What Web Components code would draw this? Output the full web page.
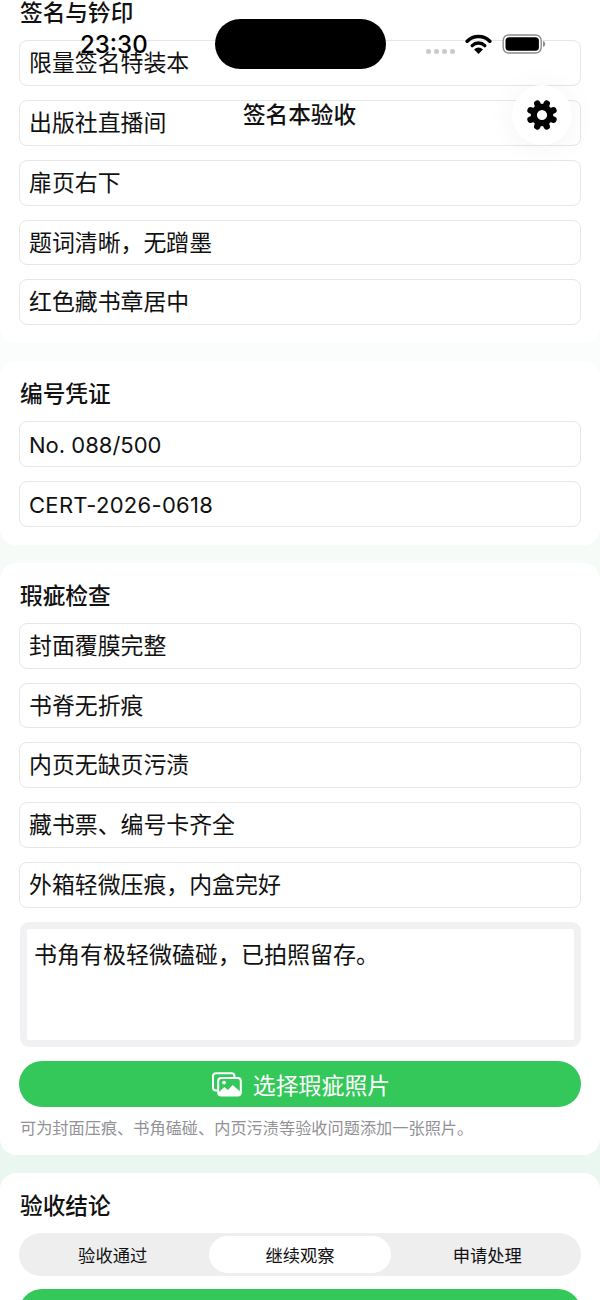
<!DOCTYPE html>
<html lang="zh-CN">
<head>
<meta charset="utf-8">
<title>签名本验收</title>
<style>
    html, body {
        margin: 0;
        padding: 0;
    }
    body {
        font-family: "Inter", "Noto Sans CJK SC", sans-serif;
        color: #111;
    }
</style>
</head>
<body>
<check-screen>
    <status-bar slot="overlay" time="23:30"></status-bar>
    <nav-header slot="overlay">签名本验收</nav-header>

    <form-card heading="签名与钤印">
        <text-field>限量签名特装本</text-field>
        <text-field>出版社直播间</text-field>
        <text-field>扉页右下</text-field>
        <text-field>题词清晰，无蹭墨</text-field>
        <text-field>红色藏书章居中</text-field>
    </form-card>

    <form-card heading="编号凭证">
        <text-field style="font-size: 22px; line-height: 46.6px">No. 088/500</text-field>
        <text-field style="font-size: 22px; line-height: 46.6px; letter-spacing: 0.3px">CERT-2026-0618</text-field>
    </form-card>

    <form-card heading="瑕疵检查">
        <text-field>封面覆膜完整</text-field>
        <text-field>书脊无折痕</text-field>
        <text-field>内页无缺页污渍</text-field>
        <text-field>藏书票、编号卡齐全</text-field>
        <text-field>外箱轻微压痕，内盒完好</text-field>
        <note-box>书角有极轻微磕碰，已拍照留存。</note-box>
        <green-button icon>选择瑕疵照片</green-button>
        <hint-text>可为封面压痕、书角磕碰、内页污渍等验收问题添加一张照片。</hint-text>
    </form-card>

    <form-card heading="验收结论">
        <segment-switch options="验收通过,继续观察,申请处理" selected="1"></segment-switch>
        <green-button></green-button>
    </form-card>
</check-screen>

<script>
    class CheckScreen extends HTMLElement {
        constructor() {
            super();
            this.attachShadow({mode: 'open'});
            this.shadowRoot.innerHTML = `
                <style>
                    :host {
                        display: block;
                        position: relative;
                        width: 600px;
                        height: 1300px;
                        overflow: hidden;
                        background: linear-gradient(#fcfefd 0%, #fafdfb 27%, #f6fbf8 42.5%, #e9f7f0 90%, #e6f6ee 100%);
                    }
                    .list {
                        display: flex;
                        flex-direction: column;
                        gap: 18px;
                        margin-top: -19.8px;
                    }
                </style>
                <div class="list"><slot></slot></div>
                <slot name="overlay"></slot>
            `;
        }
    }

    class StatusBar extends HTMLElement {
        constructor() {
            super();
            this.attachShadow({mode: 'open'});
            this.shadowRoot.innerHTML = `
                <style>
                    :host {
                        display: block;
                        position: absolute;
                        top: 0;
                        left: 0;
                        width: 600px;
                        height: 88px;
                        pointer-events: none;
                    }
                    .time {
                        position: absolute;
                        left: 80px;
                        top: 30px;
                        font: 500 24px/30px "Inter", sans-serif;
                        color: #000;
                    }
                    .island {
                        position: absolute;
                        left: 215px;
                        top: 19px;
                        width: 171px;
                        height: 50px;
                        border-radius: 25px;
                        background: #000;
                    }
                    .dots {
                        position: absolute;
                        left: 426px;
                        top: 49px;
                        display: flex;
                        gap: 3px;
                    }
                    .dots i {
                        width: 5px;
                        height: 5px;
                        border-radius: 50%;
                        background: #c9c9c9;
                    }
                    svg {
                        position: absolute;
                    }
                </style>
                <div class="time"></div>
                <div class="island"></div>
                <div class="dots"><i></i><i></i><i></i><i></i></div>
                <svg style="left:465px;top:33px" width="27" height="21" viewBox="0 0 27 21">
                    <path d="M2.2 8.2a16 16 0 0 1 22.6 0" fill="none" stroke="#000" stroke-width="3.6" stroke-linecap="round"/>
                    <path d="M7.2 12.6a9 9 0 0 1 12.6 0" fill="none" stroke="#000" stroke-width="3.4" stroke-linecap="round"/>
                    <path d="M13.5 21l-4.4-4.6a6.2 6.2 0 0 1 8.8 0z" fill="#000"/>
                </svg>
                <svg style="left:502px;top:34px" width="44" height="20" viewBox="0 0 44 20">
                    <rect x="1.2" y="1" width="38" height="18" rx="5.5" fill="#fff" stroke="#8c8c8c" stroke-width="1.4"/>
                    <rect x="3.5" y="3.2" width="33.4" height="13.6" rx="3.6" fill="#000"/>
                    <path d="M41 7v6c1.4-.4 2.2-1.6 2.2-3s-.8-2.6-2.2-3z" fill="#8c8c8c"/>
                </svg>
            `;
            this.shadowRoot.querySelector('.time').textContent = this.getAttribute('time');
        }
    }

    class NavHeader extends HTMLElement {
        constructor() {
            super();
            this.attachShadow({mode: 'open'});
            // gear teeth are rotated copies of one rounded bar
            const teeth = [22.5, 67.5, 112.5, 157.5].map(a =>
                `<rect x="12" y="0.4" width="6" height="29.2" rx="2.9" transform="rotate(${a} 15 15)"/>`).join('');
            this.shadowRoot.innerHTML = `
                <style>
                    :host {
                        display: block;
                        position: absolute;
                        top: 85px;
                        left: 0;
                        width: 600px;
                        height: 60px;
                    }
                    .title {
                        margin: -1px 1px 0 0;
                        text-align: center;
                        font: 500 22.6px/60px "Noto Sans CJK SC", sans-serif;
                        color: #111;
                    }
                    .gear {
                        position: absolute;
                        right: 28px;
                        top: 0;
                        width: 60px;
                        height: 60px;
                        display: flex;
                        align-items: center;
                        justify-content: center;
                        border-radius: 50%;
                        background: #fff;
                        box-shadow: 0 2px 30px rgba(0, 0, 0, 0.05);
                    }
                </style>
                <div class="title"><slot></slot></div>
                <div class="gear">
                    <svg width="32" height="32" viewBox="0 0 30 30" fill="#000">
                        ${teeth}
                        <circle cx="15" cy="15" r="10.5"/>
                        <circle cx="15" cy="15" r="4.8" fill="#fff"/>
                    </svg>
                </div>
            `;
        }
    }

    class FormCard extends HTMLElement {
        constructor() {
            super();
            this.attachShadow({mode: 'open'});
            this.shadowRoot.innerHTML = `
                <style>
                    :host {
                        display: block;
                        background: #fff;
                        border-radius: 16px;
                        padding: 17px 19px 18px;
                    }
                    h2 {
                        margin: 0 0 13px 1px;
                        font: 500 22.7px/30px "Noto Sans CJK SC", sans-serif;
                        color: #111;
                    }
                    .body {
                        display: flex;
                        flex-direction: column;
                        gap: 14px;
                    }
                </style>
                <h2></h2>
                <div class="body"><slot></slot></div>
            `;
            this.shadowRoot.querySelector('h2').textContent = this.getAttribute('heading');
        }
    }

    class TextField extends HTMLElement {
        constructor() {
            super();
            this.attachShadow({mode: 'open'});
            this.shadowRoot.innerHTML = `
                <style>
                    :host {
                        display: block;
                        box-sizing: border-box;
                        height: 45.8px;
                        padding: 0 9px;
                        border: 1px solid #e6e6e8;
                        border-radius: 8px;
                        background: #fff;
                        font: 400 22.9px/45.4px "Inter", "Noto Sans CJK SC", sans-serif;
                        color: #111;
                        white-space: nowrap;
                    }
                </style>
                <slot></slot>
            `;
        }
    }

    class NoteBox extends HTMLElement {
        constructor() {
            super();
            this.attachShadow({mode: 'open'});
            this.shadowRoot.innerHTML = `
                <style>
                    :host {
                        display: block;
                        box-sizing: border-box;
                        height: 125.5px;
                        margin-left: 1px;
                        padding: 7px 7px;
                        border: 7px solid #f1f1f4;
                        border-radius: 9px;
                        background: #fff;
                        font: 400 23px/34px "Noto Sans CJK SC", sans-serif;
                        color: #111;
                    }
                </style>
                <slot></slot>
            `;
        }
    }

    class GreenButton extends HTMLElement {
        constructor() {
            super();
            this.attachShadow({mode: 'open'});
            const icon = this.hasAttribute('icon') ? `
                <svg width="30" height="25" viewBox="0 0 30 25">
                    <path d="M5.5 18.5H4a3 3 0 0 1-3-3V4.2a3 3 0 0 1 3-3h15.5a3 3 0 0 1 3 3V5" fill="none" stroke="#fff" stroke-width="2"/>
                    <rect x="6.2" y="6" width="22.6" height="17.6" rx="3" fill="none" stroke="#fff" stroke-width="2"/>
                    <path d="M6.5 20.5l5.8-5.4 3.6 3 4.8-5.2 8 7.2v1.2a2.4 2.4 0 0 1-2.4 2.4H8.8a2.4 2.4 0 0 1-2.4-2.4z" fill="#fff"/>
                    <circle cx="12" cy="10.6" r="1.9" fill="#fff"/>
                </svg>` : '';
            this.shadowRoot.innerHTML = `
                <style>
                    :host {
                        display: flex;
                        align-items: center;
                        justify-content: center;
                        gap: 11px;
                        height: 46px;
                        padding-left: 2px;
                        border-radius: 23px;
                        background: #34c759;
                        color: #fff;
                        font: 400 22.9px/45px "Noto Sans CJK SC", sans-serif;
                    }
                </style>
                ${icon}<slot></slot>
            `;
        }
    }

    class HintText extends HTMLElement {
        constructor() {
            super();
            this.attachShadow({mode: 'open'});
            this.shadowRoot.innerHTML = `
                <style>
                    :host {
                        display: block;
                        margin: -3.2px 0 0 1px;
                        font: 400 16.2px/19px "Noto Sans CJK SC", sans-serif;
                        color: #919196;
                        white-space: nowrap;
                    }
                </style>
                <slot></slot>
            `;
        }
    }

    class SegmentSwitch extends HTMLElement {
        constructor() {
            super();
            this.attachShadow({mode: 'open'});
            const selected = Number(this.getAttribute('selected'));
            const items = this.getAttribute('options').split(',').map((label, i) =>
                `<div class="item${i === selected ? ' on' : ''}">${label}</div>`).join('');
            this.shadowRoot.innerHTML = `
                <style>
                    :host {
                        display: grid;
                        grid-template-columns: repeat(3, 1fr);
                        box-sizing: border-box;
                        height: 43px;
                        margin-bottom: -1px;
                        padding: 3px 0;
                        border-radius: 21.5px;
                        background: #eeeeef;
                    }
                    .item {
                        margin: 0 3px;
                        border-radius: 18.5px;
                        text-align: center;
                        font: 400 17.3px/37px "Noto Sans CJK SC", sans-serif;
                        color: #111;
                    }
                    .on {
                        background: #fff;
                    }
                </style>
                ${items}
            `;
        }
    }

    customElements.define('check-screen', CheckScreen);
    customElements.define('status-bar', StatusBar);
    customElements.define('nav-header', NavHeader);
    customElements.define('form-card', FormCard);
    customElements.define('text-field', TextField);
    customElements.define('note-box', NoteBox);
    customElements.define('green-button', GreenButton);
    customElements.define('hint-text', HintText);
    customElements.define('segment-switch', SegmentSwitch);
</script>
</body>
</html>
